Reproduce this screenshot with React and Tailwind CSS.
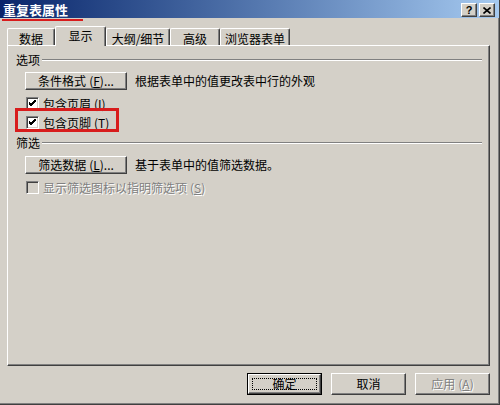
const face = 'bg-[#d4d0c8]'
const raised =
  'border border-t-white border-l-white border-r-[#404040] border-b-[#404040] shadow-[inset_-1px_-1px_0_#808080]'
const font = "font-['Noto_Sans_CJK_SC','Noto_Sans',sans-serif]"

function TitleButton({ children }) {
  return (
    <div className={`w-[16px] h-[14px] ${face} ${raised} flex items-center justify-center`}>
      {children}
    </div>
  )
}

function Button({ children, className = '', isDefault = false, disabled = false }) {
  if (isDefault) {
    return (
      <div className={`border border-black ${className}`}>
        <div className={`h-full ${face} ${raised} p-[3px]`}>
          <div className="h-full border border-dotted border-black flex items-center justify-center text-[12px] text-black">
            {children}
          </div>
        </div>
      </div>
    )
  }
  return (
    <div
      className={`${face} border border-t-white border-l-white border-r-[#404040] border-b-[#404040] shadow-[inset_-1px_-1px_0_#808080] flex items-center justify-center text-[12px] ${
        disabled ? 'text-[#808080] [text-shadow:1px_1px_0_#fff]' : 'text-black'
      } ${className}`}
    >
      {children}
    </div>
  )
}

function Checkbox({ checked, disabled }) {
  return (
    <div
      className={`w-[13px] h-[13px] shrink-0 border border-t-[#808080] border-l-[#808080] border-r-white border-b-white shadow-[inset_1px_1px_0_#404040,inset_-1px_-1px_0_#d4d0c8] ${
        disabled ? 'bg-[#d4d0c8]' : 'bg-white'
      } flex items-center justify-center`}
    >
      {checked && (
        <svg width="7" height="7" viewBox="0 0 7 7">
          <path d="M0 2 L2 4 L7 -1 M0 3 L2 5 L7 0 M0 4 L2 6 L7 1" stroke="#000" strokeWidth="1" fill="none" shapeRendering="crispEdges" />
        </svg>
      )}
    </div>
  )
}

function GroupLabel({ children }) {
  return (
    <div className="flex items-center h-[14px] pl-[8px] pr-[7px]">
      <span className="text-[12px] leading-none text-black pr-[2px]">{children}</span>
      <div className="flex-1 border-t border-t-[#808080] border-b border-b-white" />
    </div>
  )
}

function Key({ k }) {
  return (
    <span className="ml-[3px]">
      (<span className="underline">{k}</span>)
    </span>
  )
}

export default function App() {
  const tabs = [
    { label: '数据', w: 'w-[48px]' },
    { label: '显示', w: 'w-[51px]', active: true },
    { label: '大纲/细节', w: 'w-[64px]' },
    { label: '高级', w: 'w-[50px]' },
    { label: '浏览器表单', w: 'w-[70px]' },
  ]

  return (
    <div
      className={`w-[500px] h-[405px] ${face} ${font} border-r border-b border-r-[#404040] border-b-[#404040] shadow-[inset_-1px_-1px_0_#808080] overflow-hidden`}
    >
      <div className="h-[18px] bg-gradient-to-r from-[#0a246a] to-[#a6caf0] flex items-center justify-between pl-[3px] pr-[4px]">
        <span className="text-white font-bold text-[13px] leading-none">重复表属性</span>
        <div className="flex gap-[2px] mt-[2px]">
          <TitleButton>
            <span className="text-[11px] font-bold leading-none text-black font-['Liberation_Sans',sans-serif]">?</span>
          </TitleButton>
          <TitleButton>
            <svg width="8" height="7" viewBox="0 0 8 7">
              <path d="M0.5 0.5 L7.5 6.5 M7.5 0.5 L0.5 6.5" stroke="#000" strokeWidth="1.6" />
            </svg>
          </TitleButton>
        </div>
      </div>
      <div className="ml-[2px] mt-[1px] h-[2px] w-[81px] bg-[#d81c1c]" />

      <div className="ml-[7px] mt-[5px] h-[19px] flex items-end">
        {tabs.map((t) =>
          t.active ? (
            <div
              key={t.label}
              className={`${t.w} h-[20px] -mb-[1px] relative z-10 ${face} border-t border-l border-t-white border-l-white border-r border-r-[#404040] shadow-[inset_-1px_0_0_#808080] rounded-t-[2px] flex justify-center pt-[3px] text-[12px] leading-none text-black`}
            >
              {t.label}
            </div>
          ) : (
            <div
              key={t.label}
              className={`${t.w} h-[17px] ${face} border-t border-l border-t-white border-l-white border-r border-r-[#404040] shadow-[inset_-1px_0_0_#808080] rounded-t-[2px] flex justify-center pt-[4px] text-[12px] leading-none text-black`}
            >
              {t.label}
            </div>
          )
        )}
      </div>

      <div className={`ml-[7px] w-[483px] h-[321px] ${raised} pt-[7px] text-[12px] text-black`}>
        <GroupLabel>选项</GroupLabel>
        <div className="flex items-center mt-[5px] pl-[17px]">
          <Button className="w-[102px] h-[18px]">
            条件格式<Key k="F" />...
          </Button>
          <span className="ml-[8px] leading-none">根据表单中的值更改表中行的外观</span>
        </div>
        <div className="flex items-center mt-[7px] pl-[18px] h-[13px]">
          <Checkbox checked />
          <span className="ml-[4px] leading-none">
            包含页眉<Key k="I" />
          </span>
        </div>
        <div className="relative flex items-center mt-[6px] pl-[18px] h-[13px]">
          <div className="absolute left-[7px] -top-[8px] w-[104px] h-[24px] border-[3px] border-[#d81c1c]" />
          <Checkbox checked />
          <span className="ml-[4px] leading-none">
            包含页脚<Key k="T" />
          </span>
        </div>

        <div className="mt-[7px]">
          <GroupLabel>筛选</GroupLabel>
        </div>
        <div className="flex items-center mt-[6px] pl-[17px]">
          <Button className="w-[102px] h-[18px]">
            筛选数据<Key k="L" />...
          </Button>
          <span className="ml-[8px] leading-none">基于表单中的值筛选数据。</span>
        </div>
        <div className="flex items-center mt-[7px] pl-[18px] h-[13px]">
          <Checkbox disabled />
          <span className="ml-[4px] leading-none text-[#808080] [text-shadow:1px_1px_0_#fff]">
            显示筛选图标以指明筛选项<Key k="S" />
          </span>
        </div>
      </div>

      <div className="ml-[247px] mt-[7px] flex gap-[9px]">
        <Button isDefault className="w-[75px] h-[22px]">
          确定
        </Button>
        <Button className="w-[75px] h-[22px]">取消</Button>
        <Button disabled className="w-[75px] h-[22px]">
          应用<Key k="A" />
        </Button>
      </div>
    </div>
  )
}
